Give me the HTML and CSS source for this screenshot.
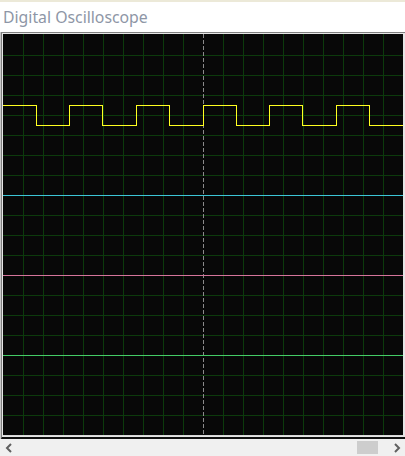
FILE: index.html
```html
<!DOCTYPE html>
<html>
<head>
<meta charset="utf-8">
<link rel="stylesheet" href="styles.css">
</head>
<body>
<div class="window">
  <div class="topstrip"></div>
  <div class="titlebar"><span class="title">Digital Oscilloscope</span></div>
  <div class="frame">
    <div class="plot">
      <svg class="scope" width="400" height="401" viewBox="0 -1 400 401" xmlns="http://www.w3.org/2000/svg">
        <rect x="0" y="-1" width="400" height="401" fill="#080808"/>
        <g stroke="#0c3a0c" stroke-width="1" shape-rendering="crispEdges">
          <line x1="20.5" y1="-1" x2="20.5" y2="400"/>
          <line x1="40.5" y1="-1" x2="40.5" y2="400"/>
          <line x1="60.5" y1="-1" x2="60.5" y2="400"/>
          <line x1="80.5" y1="-1" x2="80.5" y2="400"/>
          <line x1="100.5" y1="-1" x2="100.5" y2="400"/>
          <line x1="120.5" y1="-1" x2="120.5" y2="400"/>
          <line x1="140.5" y1="-1" x2="140.5" y2="400"/>
          <line x1="160.5" y1="-1" x2="160.5" y2="400"/>
          <line x1="180.5" y1="-1" x2="180.5" y2="400"/>
          <line x1="220.5" y1="-1" x2="220.5" y2="400"/>
          <line x1="240.5" y1="-1" x2="240.5" y2="400"/>
          <line x1="260.5" y1="-1" x2="260.5" y2="400"/>
          <line x1="280.5" y1="-1" x2="280.5" y2="400"/>
          <line x1="300.5" y1="-1" x2="300.5" y2="400"/>
          <line x1="320.5" y1="-1" x2="320.5" y2="400"/>
          <line x1="340.5" y1="-1" x2="340.5" y2="400"/>
          <line x1="360.5" y1="-1" x2="360.5" y2="400"/>
          <line x1="380.5" y1="-1" x2="380.5" y2="400"/>
          <line x1="0" y1="20.5" x2="400" y2="20.5"/>
          <line x1="0" y1="40.5" x2="400" y2="40.5"/>
          <line x1="0" y1="60.5" x2="400" y2="60.5"/>
          <line x1="0" y1="80.5" x2="400" y2="80.5"/>
          <line x1="0" y1="100.5" x2="400" y2="100.5"/>
          <line x1="0" y1="120.5" x2="400" y2="120.5"/>
          <line x1="0" y1="140.5" x2="400" y2="140.5"/>
          <line x1="0" y1="180.5" x2="400" y2="180.5"/>
          <line x1="0" y1="200.5" x2="400" y2="200.5"/>
          <line x1="0" y1="220.5" x2="400" y2="220.5"/>
          <line x1="0" y1="260.5" x2="400" y2="260.5"/>
          <line x1="0" y1="280.5" x2="400" y2="280.5"/>
          <line x1="0" y1="300.5" x2="400" y2="300.5"/>
          <line x1="0" y1="340.5" x2="400" y2="340.5"/>
          <line x1="0" y1="360.5" x2="400" y2="360.5"/>
          <line x1="0" y1="380.5" x2="400" y2="380.5"/>
        </g>
        <line x1="200.5" y1="-1" x2="200.5" y2="400" stroke="#8a8a8a" stroke-width="1" stroke-dasharray="4 2" shape-rendering="crispEdges"/>
        <line x1="0" y1="160.5" x2="400" y2="160.5" stroke="#3cc6d6" stroke-width="1" shape-rendering="crispEdges"/>
        <line x1="0" y1="240.5" x2="400" y2="240.5" stroke="#d4749a" stroke-width="1" shape-rendering="crispEdges"/>
        <line x1="0" y1="320.5" x2="400" y2="320.5" stroke="#44cc66" stroke-width="1" shape-rendering="crispEdges"/>
        <polyline fill="none" stroke="#ffff20" stroke-width="1" shape-rendering="crispEdges"
          points="0,70.5 33.5,70.5 33.5,90.5 66.5,90.5 66.5,70.5 99.5,70.5 99.5,90.5 133.5,90.5 133.5,70.5 166.5,70.5 166.5,90.5 200.5,90.5 200.5,70.5 233.5,70.5 233.5,90.5 266.5,90.5 266.5,70.5 299.5,70.5 299.5,90.5 333.5,90.5 333.5,70.5 366.5,70.5 366.5,90.5 400,90.5"/>
      </svg>
    </div>
  </div>
  <div class="scrollbar">
    <span class="arrow left-arrow">
      <svg width="8" height="10" viewBox="0 0 8 10"><polyline points="6,1 2,5 6,9" fill="none" stroke="#606060" stroke-width="2"/></svg>
    </span>
    <span class="track"><span class="thumb"></span></span>
    <span class="arrow right-arrow">
      <svg width="8" height="10" viewBox="0 0 8 10"><polyline points="2,1 6,5 2,9" fill="none" stroke="#606060" stroke-width="2"/></svg>
    </span>
  </div>
</div>
</body>
</html>
```

FILE: styles.css
```css
html, body {
  margin: 0;
  padding: 0;
  background: #ffffff;
}
.window {
  width: 405px;
  height: 456px;
  display: flex;
  flex-direction: column;
  overflow: hidden;
}
.topstrip {
  height: 2px;
  flex: none;
  background: #ece9d8;
}
.titlebar {
  height: 30px;
  flex: none;
  display: flex;
  align-items: center;
  padding-left: 3px;
}
.title {
  font-family: "Noto Sans", "Open Sans", sans-serif;
  font-size: 15.8px;
  color: #8e96a6;
}
.frame {
  flex: none;
  border-top: 1px solid #808080;
  border-left: 1px solid #808080;
  box-shadow: -1px 0 0 #c8c8c8;
  margin-left: 1px;
  padding: 1px 0 0 1px;
  background: #e6e6e6;
  width: 404px;
  height: 407px;
  box-sizing: border-box;
  border-bottom: 2px solid #101010;
}
.plot {
  width: 400px;
  height: 402px;
  display: flex;
  border-bottom: 1px solid #d8d8d8;
  box-sizing: border-box;
}
.scope {
  display: block;
}
.scrollbar {
  height: 17px;
  flex: none;
  background: #f0f0f0;
  display: flex;
  align-items: center;
}
.arrow {
  width: 17px;
  height: 17px;
  display: flex;
  align-items: center;
  justify-content: center;
}
.track {
  flex: 1;
  height: 17px;
  display: flex;
  align-items: center;
  justify-content: flex-end;
}
.thumb {
  width: 21px;
  height: 13px;
  background: #cdcdcd;
  margin-right: 10px;
}
```
